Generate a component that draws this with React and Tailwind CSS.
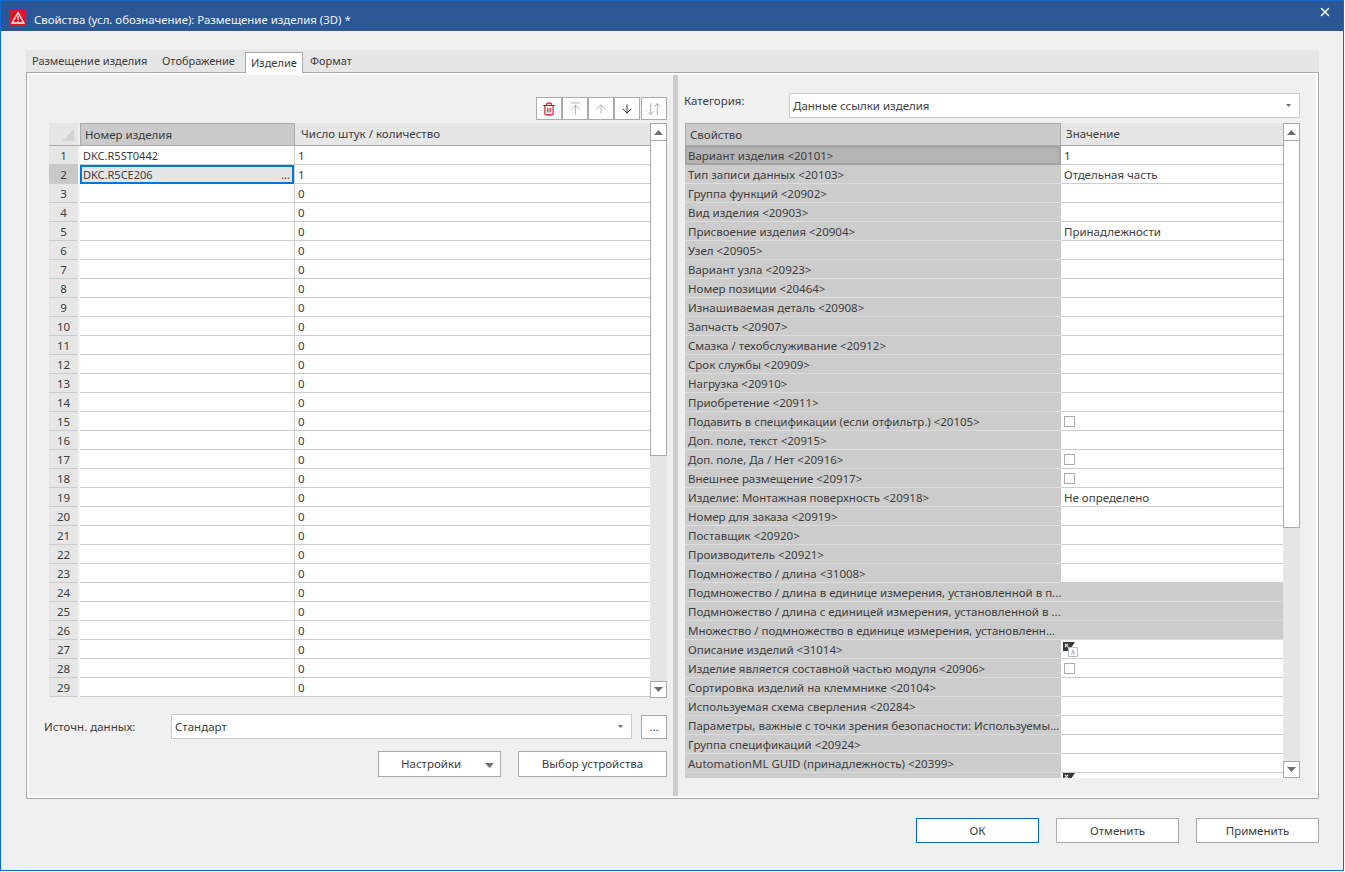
import { ArrowDown, ArrowDownUp, ArrowUp, ArrowUpToLine, Trash2, X } from 'lucide-react'

const tabs = [
  { label: 'Размещение изделия', width: 'w-[130px]' },
  { label: 'Отображение', width: 'w-[89px]' },
  { label: 'Изделие', width: 'w-[58px]', active: true },
  { label: 'Формат', width: 'w-[60px]' },
]

const articles = [
  ['DKC.R5ST0442', '1'],
  ['DKC.R5CE206', '1'],
]

// value: text, 'check' for a checkbox, 'lang' for the translate icon; grey rows are read-only
const properties = [
  { name: 'Вариант изделия <20101>', value: '1', selected: true },
  { name: 'Тип записи данных <20103>', value: 'Отдельная часть' },
  { name: 'Группа функций <20902>' },
  { name: 'Вид изделия <20903>' },
  { name: 'Присвоение изделия <20904>', value: 'Принадлежности' },
  { name: 'Узел <20905>' },
  { name: 'Вариант узла <20923>' },
  { name: 'Номер позиции <20464>' },
  { name: 'Изнашиваемая деталь <20908>' },
  { name: 'Запчасть <20907>' },
  { name: 'Смазка / техобслуживание <20912>' },
  { name: 'Срок службы <20909>' },
  { name: 'Нагрузка <20910>' },
  { name: 'Приобретение <20911>' },
  { name: 'Подавить в спецификации (если отфильтр.) <20105>', value: 'check' },
  { name: 'Доп. поле, текст <20915>' },
  { name: 'Доп. поле, Да / Нет <20916>', value: 'check' },
  { name: 'Внешнее размещение <20917>', value: 'check' },
  { name: 'Изделие: Монтажная поверхность <20918>', value: 'Не определено' },
  { name: 'Номер для заказа <20919>' },
  { name: 'Поставщик <20920>' },
  { name: 'Производитель <20921>' },
  { name: 'Подмножество / длина <31008>' },
  { name: 'Подмножество / длина в единице измерения, установленной в п...', grey: true },
  { name: 'Подмножество / длина с единицей измерения, установленной в ...', grey: true },
  { name: 'Множество / подмножество в единице измерения, установленн...', grey: true },
  { name: 'Описание изделий <31014>', value: 'lang' },
  { name: 'Изделие является составной частью модуля <20906>', value: 'check' },
  { name: 'Сортировка изделий на клеммнике <20104>' },
  { name: 'Используемая схема сверления <20284>' },
  { name: 'Параметры, важные с точки зрения безопасности: Используемы...' },
  { name: 'Группа спецификаций <20924>' },
  { name: 'AutomationML GUID (принадлежность) <20399>' },
]

function Triangle({ up, small }) {
  const size = small ? 'w-[5px] h-[3px]' : 'w-[9px] h-[5px]'
  return (
    <svg viewBox="0 0 10 6" preserveAspectRatio="none" className={`${size} fill-[#6d6d6d]`}>
      <path d={up ? 'M5 0L10 6H0Z' : 'M0 0H10L5 6Z'} />
    </svg>
  )
}

function LangIcon() {
  return (
    <svg viewBox="0 0 15 15" className="w-[15px] h-[15px]">
      <path d="M0 0H12L8 6V9H0Z" fill="#3a3a3a" />
      <path d="M2 2L5 5M5 2L2 5" stroke="#ddd" strokeWidth="1.2" />
      <rect x="5.5" y="5.5" width="9" height="9" fill="#fff" stroke="#b5c0d0" />
      <path d="M8.5 12.5L10 8L11.5 12.5M9 11H11" stroke="#9aa7bb" fill="none" strokeWidth="0.8" />
    </svg>
  )
}

function Checkbox() {
  return <div className="w-[11px] h-[11px] -mt-[2px] border border-[#aaaaaa] bg-white" />
}

function ToolButton({ children }) {
  return (
    <button className="w-[26px] h-[23px] border border-[#aaaaaa] bg-white flex items-center justify-center">
      {children}
    </button>
  )
}

function Scrollbar({ thumbHeight }) {
  return (
    <div className="w-[17px] flex flex-col bg-[#e6e6e6]">
      <div className="h-[18px] shrink-0 border border-[#aaaaaa] bg-white flex items-center justify-center">
        <Triangle up />
      </div>
      <div className="shrink-0 border border-t-0 border-[#aaaaaa] bg-white" style={{ height: thumbHeight }} />
      <div className="flex-1" />
      <div className="h-[17px] shrink-0 border border-[#aaaaaa] bg-white flex items-center justify-center">
        <Triangle />
      </div>
    </div>
  )
}

function ArticleGrid() {
  const rows = Array.from({ length: 29 }, (_, i) => i)
  return (
    <div className="ml-[5px] h-[575px] flex">
      <div className="w-[601px] flex flex-col overflow-hidden">
        <div className="h-[23px] shrink-0 flex bg-[#e6e6e6] border-b border-[#aaaaaa]">
          <div className="w-[29px] shrink-0 relative">
            <svg viewBox="0 0 12 12" className="absolute right-[4px] bottom-[4px] w-[12px] h-[12px] fill-[#d4d4d4]">
              <path d="M12 0V12H0Z" />
            </svg>
          </div>
          <div className="w-[2px] shrink-0 bg-[#f0f0f0]" />
          <div className="w-[215px] shrink-0 pl-[4px] flex items-center bg-[#cbcbcb] border border-b-0 border-[#aaaaaa]">Номер изделия</div>
          <div className="flex-1 pl-[6px] flex items-center">Число штук / количество</div>
        </div>
        {rows.map((i) => {
          const selected = i === 1
          return (
            <div key={i} className="h-[19px] shrink-0 flex bg-white">
              <div className={`w-[29px] shrink-0 pt-[2px] flex items-center justify-center border-b border-[#cccccc] ${selected ? 'bg-[#c8c8c8]' : 'bg-[#e6e6e6]'}`}>
                {i + 1}
              </div>
              <div className="w-[2px] shrink-0 bg-[#f4f4f4]" />
              {selected ? (
                <div className="w-[214px] shrink-0 pl-[1px] pr-[2px] pt-[2px] flex items-center justify-between bg-[#e6e6e6] border-2 border-[#0078d7] text-[11px]">
                  <span>{articles[i][0]}</span>
                  <span>...</span>
                </div>
              ) : (
                <div className="w-[214px] shrink-0 pl-[3px] pt-[2px] flex items-center border-b border-[#cccccc] text-[11px]">{articles[i]?.[0]}</div>
              )}
              <div className="w-px shrink-0 bg-[#cccccc]" />
              <div className="flex-1 pl-[3px] pt-[2px] flex items-center border-b border-[#cccccc]">{articles[i]?.[1] ?? '0'}</div>
            </div>
          )
        })}
      </div>
      <Scrollbar thumbHeight={315} />
    </div>
  )
}

function PropertyGrid() {
  return (
    <div className="h-[655px] flex">
      <div className="w-[598px] flex flex-col overflow-hidden">
        <div className="h-[23px] shrink-0 flex border-b border-[#aaaaaa]">
          <div className="w-[376px] shrink-0 pl-[4px] flex items-center bg-[#cbcbcb] border border-b-0 border-[#aaaaaa]">Свойство</div>
          <div className="flex-1 pl-[5px] flex items-center bg-[#e6e6e6]">Значение</div>
        </div>
        {properties.map((p) => (
          <div key={p.name} className="h-[19px] shrink-0 flex">
            <div className={`w-[376px] shrink-0 flex items-center whitespace-nowrap overflow-hidden ${p.selected ? 'bg-[#b4b4b4] border-2 border-[#a4a4a4] pl-px' : 'bg-[#cccccc] border-b border-[#dcdcdc] pl-[3px] pt-[2px]'}`}>
              {p.name}
            </div>
            <div className={`flex-1 flex items-center border-b ${p.value === 'lang' ? 'pl-[2px]' : 'pl-[3px] pt-[2px]'} ${p.grey ? 'bg-[#cccccc] border-[#dcdcdc]' : 'bg-white border-[#cccccc]'}`}>
              {p.value === 'check' ? <Checkbox /> : p.value === 'lang' ? <LangIcon /> : p.value}
            </div>
          </div>
        ))}
        <div className="h-[9px] shrink-0 flex">
          <div className="w-[376px] shrink-0 bg-[#cccccc]" />
          <div className="flex-1 pl-[2px] bg-white overflow-hidden">
            <LangIcon />
          </div>
        </div>
      </div>
      <Scrollbar thumbHeight={387} />
    </div>
  )
}

export default function App() {
  return (
    <div className="w-[1345px] h-[872px] bg-white overflow-hidden font-['Noto_Sans',sans-serif] text-[11.5px] text-[#3c3c3c]">
      <div className="w-[1344px] h-[871px] border border-[#0a6cd0] bg-[#f0f0f0] flex flex-col">
        <header className="h-[30px] shrink-0 pt-[9px] bg-[#2b5797] flex items-start text-[#f4f4f4] text-[11.4px]">
          <div className="ml-[9px] w-[16px] h-[16px] bg-[#e81123] flex items-center justify-center">
            <svg viewBox="0 0 16 16" className="w-[16px] h-[16px] fill-none stroke-white">
              <path d="M8 2.5L14 13H2Z" strokeWidth="1.3" />
              <path d="M8 5.5V10M8 11V12.5" strokeWidth="1.2" />
            </svg>
          </div>
          <span className="ml-[8px] mt-px flex-1">Свойства (усл. обозначение): Размещение изделия (3D) *</span>
          <X size={14} strokeWidth={2.5} className="mr-[11px] -mt-[5px] text-white" />
        </header>

        <main className="flex-1 pt-[19px] pl-[25px]">
          <div className="w-[1293px] h-[22px] bg-[#e6e6e6] flex items-end text-[11px]">
            {tabs.map((tab) => (
              tab.active ? (
                <div key={tab.label} className={`${tab.width} h-[21px] -mb-px z-10 pl-[5px] mr-px bg-white border border-b-0 border-[#aaaaaa] flex items-center`}>{tab.label}</div>
              ) : (
                <div key={tab.label} className={`${tab.width} h-[21px] pl-[6px] flex items-center`}>{tab.label}</div>
              )
            ))}
          </div>

          <div className="w-[1293px] h-[727px] border border-[#aaaaaa]">
            <div className="h-full border-2 border-[#fbfbfb] flex">
              <section className="w-[644px] shrink-0 pl-[15px] pr-[6px] pt-[22px]">
                <div className="flex justify-end items-center h-[23px] mb-[3px]">
                  <ToolButton><Trash2 size={14} strokeWidth={1.9} className="text-[#e00020]" /></ToolButton>
                  <ToolButton><ArrowUpToLine size={15} strokeWidth={1.3} className="text-[#a0a0a0]" /></ToolButton>
                  <ToolButton><ArrowUp size={14} strokeWidth={1.3} className="text-[#a0a0a0]" /></ToolButton>
                  <ToolButton><ArrowDown size={14} strokeWidth={1.6} className="text-[#222222]" /></ToolButton>
                  <div className="w-px" />
                  <ToolButton><ArrowDownUp size={16} strokeWidth={1.3} className="text-[#a0a0a0]" /></ToolButton>
                </div>
                <ArticleGrid />
                <div className="mt-[16px] flex items-center h-[25px]">
                  <span className="w-[127px] shrink-0">Источн. данных:</span>
                  <div className="w-[461px] h-[25px] bg-white border border-[#cccccc] flex items-center justify-between pl-[3px] pr-[8px]">
                    <span>Стандарт</span>
                    <Triangle small />
                  </div>
                  <button className="ml-[9px] w-[26px] h-[24px] bg-white border border-[#aaaaaa]">...</button>
                </div>
                <div className="mt-[12px] flex justify-end">
                  <button className="w-[123px] h-[26px] bg-white border border-[#aaaaaa] flex items-center relative pl-[22px]">
                    Настройки
                    <span className="absolute right-[6px] top-[11px] flex"><Triangle /></span>
                  </button>
                  <button className="ml-[17px] w-[149px] h-[26px] bg-white border border-[#aaaaaa]">Выбор устройства</button>
                </div>
              </section>

              <div className="w-[5px] shrink-0 bg-[#cccccc]" />

              <section className="flex-1 pl-[7px] pr-[17px] pt-[18px]">
                <div className="flex items-center h-[25px] mb-[5px]">
                  <span className="w-[105px] shrink-0 -ml-[1px] -mt-[10px]">Категория:</span>
                  <div className="flex-1 h-[25px] bg-white border border-[#cccccc] flex items-center justify-between pl-[3px] pr-[8px]">
                    <span>Данные ссылки изделия</span>
                    <Triangle small />
                  </div>
                </div>
                <PropertyGrid />
              </section>
            </div>
          </div>

          <div className="w-[1293px] mt-[19px] flex justify-end gap-[17px]">
            <button className="w-[123px] h-[25px] bg-white border border-[#0a64c8]">ОК</button>
            <button className="w-[123px] h-[25px] bg-white border border-[#aaaaaa]">Отменить</button>
            <button className="w-[123px] h-[25px] bg-white border border-[#aaaaaa]">Применить</button>
          </div>
        </main>
      </div>
    </div>
  )
}
